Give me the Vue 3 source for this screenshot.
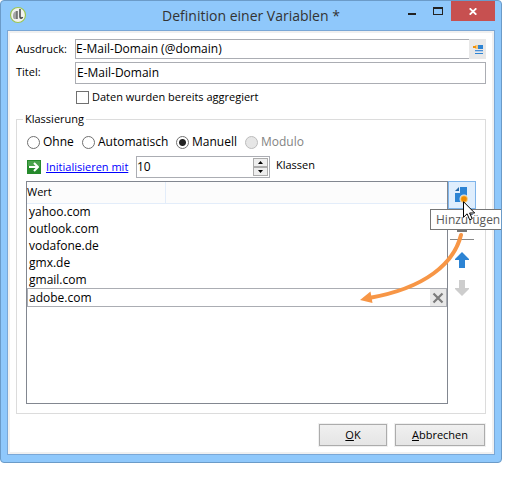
<script setup>
import { ref } from 'vue'

const expression = ref('E-Mail-Domain (@domain)')
const title = ref('E-Mail-Domain')
const aggregated = ref(false)
const mode = ref('manual')
const classes = ref(10)
const modes = [
  { id: 'none', label: 'Ohne' },
  { id: 'auto', label: 'Automatisch' },
  { id: 'manual', label: 'Manuell' },
  { id: 'modulo', label: 'Modulo', disabled: true }
]
const values = ref(['yahoo.com', 'outlook.com', 'vodafone.de', 'gmx.de', 'gmail.com'])
const edited = ref('adobe.com')
</script>

<template>
  <main class="dialog">
    <header class="titlebar">
      <svg class="app-icon" width="18" height="18" viewBox="0 0 18 18" aria-hidden="true">
        <circle cx="9" cy="9" r="7.500" fill="#f2f2ee" stroke="#9cc653" stroke-width="1.200" />
        <path d="M4 9c0-2 2-4 4-4v8H5c-1-1-1-2-1-4z" fill="#a5a5a5" />
        <path d="M8 5v8" stroke="#666" stroke-width="1.500" />
        <path d="M11 3v8c0 1.500 2 1.500 2.500 0" fill="none" stroke="#444" stroke-width="1.500" />
      </svg>
      <h1>Definition einer Variablen *</h1>
      <div class="window-controls">
        <button type="button" class="win" aria-label="Minimieren">
          <svg width="10" height="10" viewBox="0 0 10 10"><path d="M1 7h8v2H1z" fill="#222" /></svg>
        </button>
        <button type="button" class="win" aria-label="Maximieren">
          <svg width="10" height="8" viewBox="0 0 10 8"><path d="M0 0h10v8H0zM1 2v5h8V2z" fill="#222" fill-rule="evenodd" /></svg>
        </button>
        <button type="button" class="win close" aria-label="Schließen">
          <svg width="8" height="7" viewBox="0 0 8 7"><path d="M.7.3 7.300 6.700M7.300.3.7 6.700" stroke="#fff" stroke-width="1.800" /></svg>
        </button>
      </div>
    </header>

    <form class="client" @submit.prevent>
      <div class="fields">
        <label for="expr">Ausdruck:</label>
        <div class="expr">
          <input id="expr" v-model="expression" type="text" />
          <button type="button" class="edit" aria-label="Ausdruck bearbeiten">
            <svg width="11" height="11" viewBox="0 0 11 11">
              <path d="M5 1h6v4H5z" fill="#2d84d4" />
              <path d="M3 6h8v1H3z" fill="#4a90d6" />
              <path d="M3 7h8v1H3z" fill="#b5cfec" />
              <path d="M3 9h8v1H3z" fill="#2d84d4" />
              <path d="M3 1h3v4H3z" fill="#f7c77c" />
              <path d="M1 2h3v2H1z" fill="#f0920c" />
            </svg>
          </button>
        </div>
        <label for="title">Titel:</label>
        <input id="title" v-model="title" class="title-input" type="text" />
      </div>

      <label class="check"><input v-model="aggregated" type="checkbox" /><span>Daten wurden bereits aggregiert</span></label>

      <fieldset>
        <legend>Klassierung</legend>
        <div class="radios">
          <label v-for="m in modes" :key="m.id" :class="{ disabled: m.disabled }">
            <input v-model="mode" type="radio" name="mode" :value="m.id" :disabled="m.disabled" />
            <span>{{ m.label }}</span>
          </label>
        </div>

        <div class="init">
          <svg class="go" width="14" height="14" viewBox="0 0 14 14" aria-hidden="true">
            <path d="M0 0h14v14H0z" fill="#268a2c" />
            <path d="M1 1h12v5H1z" fill="#4aa24c" />
            <path d="M2 7h9M7 3l4 4-4 4" fill="none" stroke="#fff" stroke-width="2" />
          </svg>
          <a href="#init">Initialisieren mit</a>
          <div class="spinner">
            <input id="classes" v-model.number="classes" type="text" inputmode="numeric" />
            <div class="steps">
              <button type="button" aria-label="Mehr" @click="classes++">
                <svg width="5" height="3" viewBox="0 0 5 3"><path d="M0 3h5L2.500 0z" fill="#000" /></svg>
              </button>
              <button type="button" aria-label="Weniger" @click="classes--">
                <svg width="5" height="3" viewBox="0 0 5 3"><path d="M0 0h5L2.500 3z" fill="#000" /></svg>
              </button>
            </div>
          </div>
          <label class="unit" for="classes">Klassen</label>
        </div>

        <div class="editor">
          <div class="list">
            <table>
              <thead>
                <tr><th scope="col">Wert</th><td></td></tr>
              </thead>
              <tbody>
                <tr v-for="v in values" :key="v"><td colspan="2">{{ v }}</td></tr>
              </tbody>
            </table>
            <div class="edit-row">
              <input v-model="edited" type="text" aria-label="Wert" />
              <button type="button" aria-label="Löschen">
                <svg width="12" height="12" viewBox="0 0 12 12"><path d="m1.500 1.500 9 9m0-9-9 9" stroke="#7c7c7c" stroke-width="2.200" /></svg>
              </button>
            </div>
          </div>

          <div class="tools">
            <button type="button" class="add" aria-label="Hinzufügen">
              <svg width="16" height="18" viewBox="0 0 16 18">
                <path d="M6 0h7v15H6z" fill="#2d84d4" />
                <path d="M5 0v4H1z" fill="#2468a8" />
                <path d="M1 6h5v9H1z" fill="#2d84d4" />
                <circle cx="10" cy="12" r="4.500" fill="#dfeefd" />
                <circle cx="10" cy="12" r="3.800" fill="#f6c46f" />
                <circle cx="10" cy="12" r="2.800" fill="#f08c00" />
              </svg>
            </button>
            <button type="button" class="remove" aria-label="Entfernen">
              <svg width="10" height="2" viewBox="0 0 10 2"><path d="M0 0h10v2H0z" fill="#777" /></svg>
            </button>
            <hr />
            <button type="button" class="move" aria-label="Nach oben">
              <svg width="14" height="16" viewBox="0 0 14 16"><path d="m7 0 7 7v1h-4v8H4V8H0V7z" fill="#2d84d4" /></svg>
            </button>
            <button type="button" class="move" aria-label="Nach unten" disabled>
              <svg width="14" height="16" viewBox="0 0 14 16"><path d="M4 0h6v8h4v1l-7 7-7-7V8h4z" fill="#cdcdcd" /></svg>
            </button>
            <div class="tooltip" role="tooltip">Hinzufügen</div>
            <svg class="flow-arrow" width="110" height="80" viewBox="0 0 110 80" aria-hidden="true">
              <path d="M104 6C97 34 69 59 12 69" fill="none" stroke="#f79646" stroke-width="4" stroke-linecap="round" />
              <path d="m3 71 10.500-8.500 2 11.500z" fill="#f79646" />
            </svg>
            <svg class="cursor" width="13" height="20" viewBox="0 0 13 20" aria-hidden="true">
              <path d="M.5.7v15.600l3.600-3.500 2.600 6 2.500-1.100-2.600-5.700h5.100z" fill="#fff" stroke="#000" />
            </svg>
          </div>
        </div>
      </fieldset>

      <footer>
        <button type="submit" class="ok"><u>O</u>K</button>
        <button type="button" class="cancel"><u>A</u>bbrechen</button>
      </footer>
    </form>
  </main>
</template>

<style>
body {
  background: #fff;
}
</style>

<style scoped>
* {
  box-sizing: border-box;
}
.dialog {
  position: relative;
  margin-right: 15px;
  padding: 0 6px 7px;
  overflow: hidden;
  border: 1px solid #6b9bc8;
  border-radius: 4px;
  background: #8fc8fb;
  font: 11px/16px "Open Sans", "Noto Sans", sans-serif;
  color: #000;
}
button,
input {
  margin: 0;
  padding: 0;
  font: inherit;
  color: inherit;
}
input[type='text'] {
  min-width: 0;
  border: 1px solid #abadb3;
  border-radius: 0;
  background: #fff;
  outline: none;
  font-size: 12px;
}
svg {
  display: block;
}
.titlebar {
  display: grid;
  grid-template-columns: 96px 1fr 96px;
  height: 29px;
}
.app-icon {
  margin: 5px 0 0 2px;
}
h1 {
  margin: 0;
  font-size: 14px;
  line-height: 29px;
  font-weight: 400;
  text-align: center;
  white-space: nowrap;
  color: #333;
}
.window-controls {
  display: flex;
  justify-content: flex-end;
}
.win {
  display: flex;
  align-items: center;
  justify-content: center;
  width: 27px;
  height: 20px;
  border: 0;
  background: none;
}
.close {
  width: 45px;
  background: #c75050;
}
.client {
  padding: 8px;
  border: 1px solid #7aa7d6;
  outline: 2px solid #f0f0f0;
  outline-offset: -3px;
  background: #fff;
}
.fields {
  display: grid;
  grid-template-columns: 59px 1fr;
  row-gap: 3px;
}
.fields label {
  line-height: 19px;
}
.expr {
  display: flex;
  height: 20px;
}
.expr input {
  flex: 1;
  border-right: 0;
}
.edit {
  display: flex;
  align-items: center;
  justify-content: center;
  width: 17px;
  border: 0;
  background: #e8e8e8;
}
.title-input {
  height: 22px;
  padding: 0 1px 2px;
}
.check {
  display: flex;
  align-items: center;
  gap: 3px;
  height: 16px;
  margin: 5px 0 0 60px;
}
input[type='checkbox'],
input[type='radio'] {
  appearance: none;
  width: 13px;
  height: 13px;
  flex: none;
  border: 1px solid #707070;
  background: #fff;
}
input[type='radio'] {
  border-radius: 50%;
}
input[type='radio']:checked {
  background: radial-gradient(circle, #222 3px, #fff 4px);
}
input[type='radio']:disabled {
  border-color: #bcbcbc;
  background: #e6e6e6;
}
fieldset {
  min-width: 0;
  margin: 6px 0 0;
  padding: 7px 9px 9px;
  border: 1px solid #dcdcdc;
}
legend {
  margin-left: -3px;
  padding: 0 2px;
}
.radios {
  display: grid;
  grid-template-columns: 55px 94px 69px auto;
  padding-left: 1px;
  font-size: 12px;
}
.radios label {
  display: flex;
  align-items: center;
  gap: 3px;
  height: 16px;
}
.disabled {
  color: #838383;
}
.init {
  display: flex;
  align-items: center;
  margin-top: 6px;
  padding-left: 1px;
}
.init a {
  width: 90px;
  margin-left: 5px;
  white-space: nowrap;
  color: #00f;
}
.spinner {
  display: flex;
  width: 134px;
  height: 22px;
  border: 1px solid #abadb3;
}
.spinner input[type='text'] {
  flex: 1;
  border: 0;
}
.steps {
  display: flex;
  flex-direction: column;
  width: 17px;
  padding: 1px;
}
.steps button {
  display: flex;
  flex: 1;
  align-items: center;
  justify-content: center;
  border: 1px solid #acacac;
  background: #eee;
}
.unit {
  margin-left: 6px;
  padding-bottom: 5px;
}
.editor {
  display: flex;
  align-items: stretch;
  margin-top: 3px;
}
.list {
  flex: 1;
  min-height: 223px;
  border: 1px solid #828790;
  font-size: 12px;
}
table {
  width: 100%;
  border-collapse: collapse;
  table-layout: fixed;
}
thead th,
thead td {
  height: 21px;
  padding: 0;
  border-bottom: 1px solid #e3edfa;
  background: #fcfcfc;
  font-size: 11px;
  font-weight: 400;
  text-align: left;
}
thead th {
  width: 138px;
  border-right: 1px solid #e3edfa;
}
tbody td {
  height: 17px;
  padding: 0 2px;
}
.edit-row {
  display: flex;
  height: 19px;
  border: 1px solid #abadb3;
}
.edit-row input[type='text'] {
  flex: 1;
  padding: 0 1px;
  border: 0;
}
.edit-row button {
  display: flex;
  align-items: center;
  justify-content: center;
  width: 16px;
  border: 0;
  background: #e8e8e8;
}
.tools {
  position: relative;
  display: flex;
  flex-direction: column;
  align-items: center;
  width: 28px;
}
.tools button {
  display: flex;
  justify-content: center;
  width: 28px;
  border: 0;
  background: none;
}
.tools .add {
  height: 28px;
  padding-top: 5px;
  border: 1px solid #7eb4ea;
  background: #dfeefd;
}
.tools .remove {
  height: 30px;
  align-items: center;
  padding-top: 14px;
}
hr {
  width: 24px;
  height: 1px;
  margin: 0;
  border: 0;
  background: #888;
}
.tools .move {
  height: 28px;
  padding-top: 12px;
}
.tooltip {
  position: absolute;
  top: 28px;
  left: -18px;
  width: 76px;
  height: 21px;
  padding-left: 5px;
  border: 1px solid #767676;
  background: #fff;
  color: #575757;
  font-size: 12px;
  line-height: 19px;
}
.flow-arrow {
  position: absolute;
  top: 48px;
  right: 9px;
}
.cursor {
  position: absolute;
  top: 20px;
  left: 15px;
}
footer {
  display: flex;
  justify-content: flex-end;
  gap: 8px;
  padding: 10px 1px 0 0;
}
footer button {
  height: 22px;
  border: 1px solid #acacac;
  outline: 1px solid #f0f0f0;
  background: linear-gradient(#f0f0f0, #e5e5e5);
}
.ok {
  width: 68px;
}
.cancel {
  width: 90px;
}
</style>
